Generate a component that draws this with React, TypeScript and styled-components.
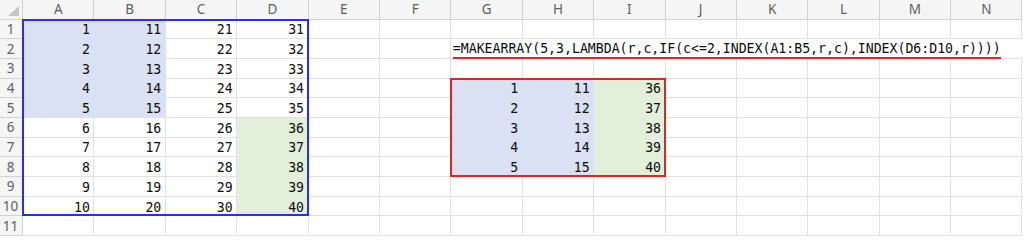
import React from "react";
import styled, { createGlobalStyle } from "styled-components";

const COLS = ["A", "B", "C", "D", "E", "F", "G", "H", "I", "J", "K", "L", "M", "N"];
const ROW_COUNT = 11;

const blueFill = "#d9e1f2";
const greenFill = "#e2efda";
const gridLine = "#e1e1e1";
const headerLine = "#d2d2d2";

type Fill = "blue" | "green" | undefined;

const GlobalStyle = createGlobalStyle`
    html, body {
        margin: 0;
        padding: 0;
        background: #ffffff;
    }
    #root {
        width: 1024px;
        height: 240px;
        overflow: hidden;
    }
`;

const Sheet = styled.div`
    display: grid;
    grid-template-columns: 23px repeat(14, 71.4px);
    grid-template-rows: 19.5px repeat(${ROW_COUNT}, 19.7px);
    width: 1024px;
    background: #ffffff;
`;

const Corner = styled.div`
    grid-column: 1;
    grid-row: 1;
    position: relative;
    background: #f5f5f5;
    border-right: 1px solid ${headerLine};
    border-bottom: 1px solid ${headerLine};
    box-sizing: border-box;

    &::after {
        content: "";
        position: absolute;
        right: 3px;
        bottom: 3px;
        width: 0;
        height: 0;
        border-left: 11px solid transparent;
        border-bottom: 10px solid #c6c6c6;
    }
`;

const ColHeader = styled.div`
    display: flex;
    align-items: center;
    justify-content: center;
    background: #f5f5f5;
    border-right: 1px solid ${headerLine};
    border-bottom: 1px solid ${headerLine};
    box-sizing: border-box;
    font-family: "Noto Sans", "Liberation Sans", sans-serif;
    font-size: 13.5px;
    color: #5f5f5f;
`;

const RowHeader = styled(ColHeader)`
    padding-right: 1px;
`;

const Cell = styled.div<{ $fill?: Fill }>`
    display: flex;
    align-items: center;
    justify-content: flex-end;
    padding: 2px 3.5px 0 0;
    box-sizing: border-box;
    background: ${(p) => (p.$fill === "blue" ? blueFill : p.$fill === "green" ? greenFill : "#ffffff")};
    border-right: 1px solid ${(p) => (p.$fill === "blue" ? blueFill : p.$fill === "green" ? greenFill : gridLine)};
    border-bottom: 1px solid ${(p) => (p.$fill === "blue" ? blueFill : p.$fill === "green" ? greenFill : gridLine)};
    font-family: "DejaVu Sans Mono", "Liberation Mono", monospace;
    font-size: 13.2px;
    color: #0d0d0d;
`;

// text in G2 spills over the empty cells to its right
const FormulaCell = styled.div`
    grid-column: 8 / 16;
    grid-row: 3;
    z-index: 1;
    display: flex;
    align-items: flex-end;
    padding-left: 1.5px;
    background: #ffffff;
    border-bottom: 1px solid ${gridLine};
    box-sizing: border-box;
`;

const FormulaText = styled.span`
    display: inline-block;
    margin-bottom: -1.5px;
    line-height: 17px;
    border-bottom: 2px solid #e8231f;
    font-family: "DejaVu Sans Mono", "Liberation Mono", monospace;
    font-size: 13.2px;
    color: #0d0d0d;
    white-space: nowrap;
`;

const RangeOutline = styled.div<{ $col: string; $row: string; $color: string }>`
    grid-column: ${(p) => p.$col};
    grid-row: ${(p) => p.$row};
    z-index: 2;
    margin: -1px 0 0 -1px;
    border: 2px solid ${(p) => p.$color};
    pointer-events: none;
`;

// source table A1:D10 and the spilled MAKEARRAY result in G4:I8
function cellAt(col: number, row: number): { value?: number; fill?: Fill } {
    if (row >= 1 && row <= 10 && col <= 3) {
        const value = row + col * 10;
        let fill: Fill;
        if (col <= 1 && row <= 5) fill = "blue";
        if (col === 3 && row >= 6) fill = "green";
        return { value, fill };
    }
    if (row >= 4 && row <= 8 && col >= 6 && col <= 8) {
        const r = row - 3;
        if (col === 6) return { value: r, fill: "blue" };
        if (col === 7) return { value: r + 10, fill: "blue" };
        return { value: r + 35, fill: "green" };
    }
    return {};
}

export default function App() {
    const rows = Array.from({ length: ROW_COUNT }, (_, i) => i + 1);
    return (
        <>
            <GlobalStyle />
            <Sheet>
                <Corner />
                {COLS.map((c) => (
                    <ColHeader key={c}>{c}</ColHeader>
                ))}
                {rows.map((r) => (
                    <React.Fragment key={r}>
                        <RowHeader style={{ gridRow: r + 1, gridColumn: 1 }}>{r}</RowHeader>
                        {COLS.map((c, ci) => {
                            const cell = cellAt(ci, r);
                            return (
                                <Cell key={c} $fill={cell.fill} style={{ gridRow: r + 1, gridColumn: ci + 2 }}>
                                    {cell.value}
                                </Cell>
                            );
                        })}
                    </React.Fragment>
                ))}
                <FormulaCell>
                    <FormulaText>=MAKEARRAY(5,3,LAMBDA(r,c,IF(c&lt;=2,INDEX(A1:B5,r,c),INDEX(D6:D10,r))))</FormulaText>
                </FormulaCell>
                <RangeOutline $col="2 / 6" $row="2 / 12" $color="#2b2bff" />
                <RangeOutline $col="8 / 11" $row="5 / 10" $color="#e8231f" />
            </Sheet>
        </>
    );
}
